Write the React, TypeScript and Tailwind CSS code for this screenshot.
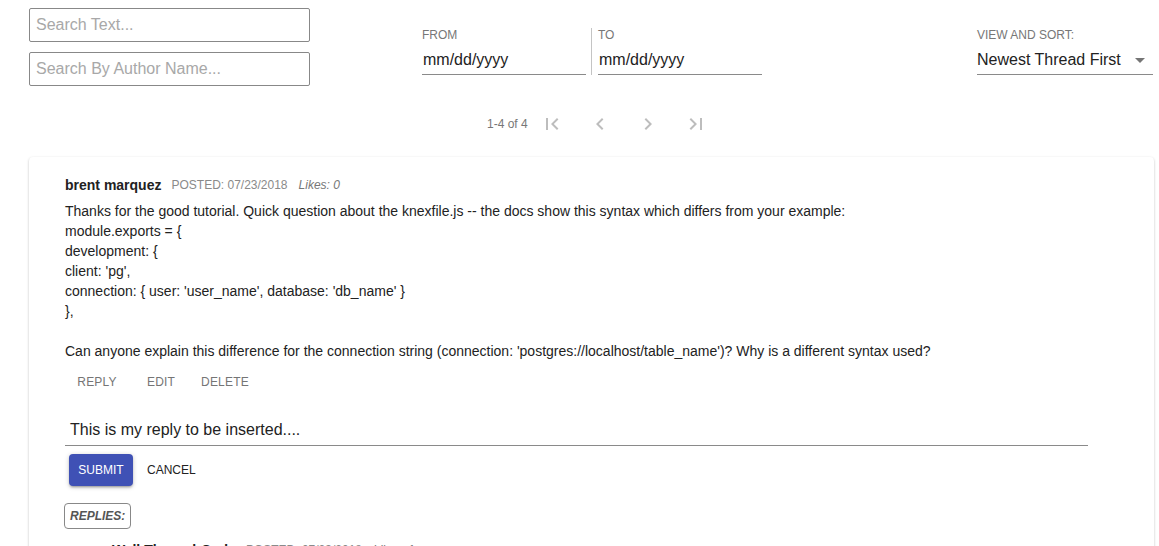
import React from "react";

const font = { fontFamily: '"Liberation Sans", Arial, sans-serif' };

function Icon({ d }: { d: string }) {
  return (
    <svg viewBox="0 0 24 24" className="w-6 h-6" fill="#bdbdbd">
      <path d={d} />
    </svg>
  );
}

function ActionBtn({ label }: { label: string }) {
  return (
    <button className="min-w-[64px] h-[32px] px-2 flex items-center justify-center text-[12px] text-[#757575] font-medium tracking-[0.2px]">
      {label}
    </button>
  );
}

export default function App() {
  const body = [
    "Thanks for the good tutorial. Quick question about the knexfile.js -- the docs show this syntax which differs from your example:",
    "module.exports = {",
    "development: {",
    "client: 'pg',",
    "connection: { user: 'user_name', database: 'db_name' }",
    "},",
    "\u00a0",
    "Can anyone explain this difference for the connection string (connection: 'postgres://localhost/table_name')? Why is a different syntax used?",
  ];
  return (
    <div className="w-[1159px] h-[546px] overflow-hidden bg-white text-[#222]" style={font}>
      {/* Header */}
      <div className="flex items-start">
        <div className="ml-[29px] mt-[8px] w-[281px] flex flex-col gap-[10px]">
          <input
            placeholder="Search Text..."
            className="h-[34px] border border-[#888] rounded-[2px] pl-[6px] text-[16px] placeholder-[#a8a8a8] outline-none"
          />
          <input
            placeholder="Search By Author Name..."
            className="h-[34px] border border-[#888] rounded-[2px] pl-[6px] text-[16px] placeholder-[#a8a8a8] outline-none"
          />
        </div>
        <div className="ml-[112px] mt-[28px] flex">
          <div className="w-[164px] flex flex-col">
            <div className="text-[12px] leading-[14px] text-[#777]">FROM</div>
            <div className="mt-[5px] h-[28px] pt-[1px] border-b border-[#8a8a8a] text-[16px] leading-[24px] pl-[1px]">mm/dd/yyyy</div>
          </div>
          <div className="ml-[5px] mr-[6px] w-px h-[47px] bg-[#c4c4c4]" />
          <div className="w-[164px] flex flex-col">
            <div className="text-[12px] leading-[14px] text-[#777]">TO</div>
            <div className="mt-[5px] h-[28px] pt-[1px] border-b border-[#8a8a8a] text-[16px] leading-[24px] pl-[1px]">mm/dd/yyyy</div>
          </div>
        </div>
        <div className="ml-auto mr-[6px] mt-[28px] w-[176px] flex flex-col">
          <div className="text-[12px] leading-[14px] text-[#777]">VIEW AND SORT:</div>
          <div className="mt-[5px] h-[28px] pb-[2px] border-b border-[#8a8a8a] text-[16px] leading-[24px] flex items-center justify-between">
            <span>Newest Thread First</span>
            <svg viewBox="0 0 24 24" className="w-6 h-6 mr-[1px]" fill="#757575">
              <path d="M7 10l5 5 5-5z" />
            </svg>
          </div>
        </div>
      </div>

      {/* Pagination */}
      <div className="mt-[14px] ml-[487px] flex items-center h-[48px]">
        <span className="text-[12px] text-[#777]">1-4 of 4</span>
        <div className="w-[48px] h-[48px] flex items-center justify-center">
          <Icon d="M18.41 16.59L13.82 12l4.59-4.59L17 6l-6 6 6 6zM6 6h2v12H6z" />
        </div>
        <div className="w-[48px] h-[48px] flex items-center justify-center">
          <Icon d="M15.41 7.41L14 6l-6 6 6 6 1.41-1.41L10.83 12z" />
        </div>
        <div className="w-[48px] h-[48px] flex items-center justify-center">
          <Icon d="M10 6L8.59 7.41 13.17 12l-4.58 4.59L10 18l6-6z" />
        </div>
        <div className="w-[48px] h-[48px] flex items-center justify-center">
          <Icon d="M5.59 7.41L10.18 12l-4.59 4.59L7 18l6-6-6-6zM16 6h2v12h-2z" />
        </div>
      </div>

      {/* Card */}
      <div className="mt-[9px] ml-[29px] w-[1125px] h-[600px] rounded-[4px] bg-white shadow-[0_1px_3px_0_rgba(0,0,0,0.2),0_1px_1px_0_rgba(0,0,0,0.14),0_2px_1px_-1px_rgba(0,0,0,0.12)] pt-[18px] pl-[36px]">
        <div className="flex items-center h-[20px]">
          <span className="text-[14px] font-bold text-[#222]">brent marquez</span>
          <span className="ml-[10px] text-[12px] text-[#8a8a8a]">POSTED: 07/23/2018</span>
          <span className="ml-[11px] text-[12px] italic text-[#777]">Likes: 0</span>
        </div>
        <div className="mt-[6px] text-[14px] leading-[20px] text-[#222]">
          {body.map((l, i) => (
            <div key={i}>{l}</div>
          ))}
        </div>
        <div className="mt-[5px] flex">
          <ActionBtn label="REPLY" />
          <ActionBtn label="EDIT" />
          <ActionBtn label="DELETE" />
        </div>
        <div className="mt-[13px] w-[1023px] h-[35px] pt-[4px] border-b-[1.5px] border-[#8a8a8a] flex items-center pl-[5px] text-[16px] text-[#222]">
          This is my reply to be inserted....
        </div>
        <div className="mt-[8px] ml-[4px] flex items-center">
          <button className="w-[64px] h-[32px] rounded-[4px] bg-[#3f51b5] text-white text-[12px] font-medium shadow-[0_1px_5px_0_rgba(0,0,0,0.2),0_2px_2px_0_rgba(0,0,0,0.14),0_3px_1px_-2px_rgba(0,0,0,0.12)]">
            SUBMIT
          </button>
          <button className="ml-[6px] min-w-[64px] h-[32px] px-2 text-[12px] text-[#222]">CANCEL</button>
        </div>
        <div className="mt-[17px] -ml-[1px] inline-flex items-center h-[26px] px-[5px] border border-[#888] rounded-[4px] text-[12px] italic font-semibold text-[#555]">
          REPLIES:
        </div>
        <div className="mt-[11px] ml-[47px] flex items-center h-[20px]">
          <span className="text-[14px] font-bold text-[#222]">WalkThroughCode</span>
          <span className="ml-[10px] text-[12px] text-[#8a8a8a]">POSTED: 07/23/2018</span>
          <span className="ml-[11px] text-[12px] italic text-[#777]">Likes: 1</span>
        </div>
      </div>
    </div>
  );
}
